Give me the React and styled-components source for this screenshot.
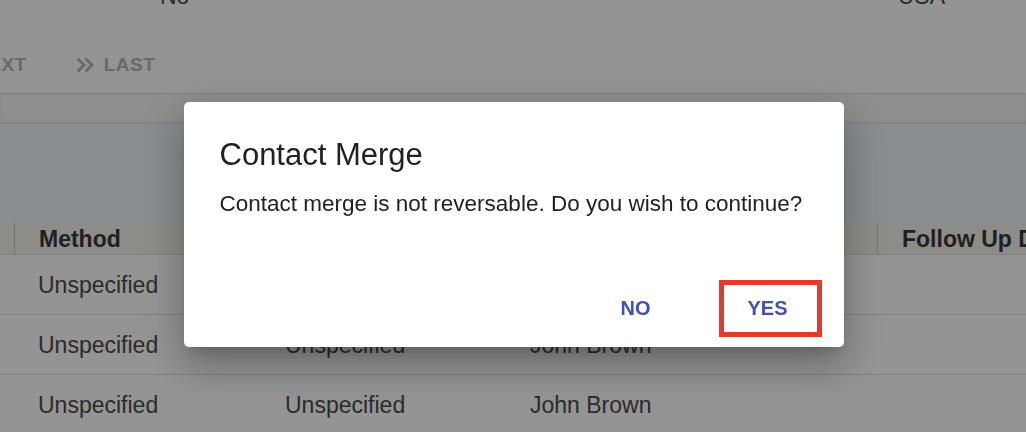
import styled, { createGlobalStyle } from "styled-components";

const GlobalStyle = createGlobalStyle`
	html, body {
		margin: 0;
		padding: 0;
		background: #ffffff;
		overflow: hidden;
	}
	body {
		font-family: "Liberation Sans", Arial, sans-serif;
		color: #4a4a4a;
	}
`;

const Page = styled.div`
	width: 1026px;
	height: 432px;
	overflow: hidden;
`;

const InfoRow = styled.div`
	display: flex;
	height: 30px;
	margin-top: -19px;
	font-size: 23px;
	line-height: 30px;
	color: #4a4a4a;
`;

const InfoCell = styled.div`
	margin-left: ${(props) => props.left || "0"};
	margin-right: ${(props) => props.right || "0"};
`;

const Pager = styled.div`
	display: flex;
	align-items: center;
	height: 83px;
	margin-left: -26px;
	border-bottom: 1px solid #dcdcdc;
	box-sizing: border-box;
	padding-top: 26px;
`;

const PagerButton = styled.div`
	display: flex;
	align-items: center;
	gap: 9px;
	margin-right: ${(props) => props.gap || "0"};
	font-size: 19px;
	font-weight: 600;
	letter-spacing: 0.5px;
	color: #b6b6b6;
`;

const Strip = styled.div`
	height: 30px;
	background: #f4f4f4;
	box-shadow: inset 0 -3px 4px -2px rgba(0, 0, 0, 0.12);
`;

const Banner = styled.div`
	height: 99px;
	background: #e9f3f8;
`;

const TableRow = styled.div`
	display: grid;
	grid-template-columns: 14px 247px 245px 371px 1fr;
	height: ${(props) => (props.head ? "32px" : "60px")};
	background: ${(props) => (props.head ? "#f4f1ea" : "#ffffff")};
	border-bottom: 1px solid #dedede;
	box-sizing: border-box;
	font-size: 23px;
	font-weight: ${(props) => (props.head ? "bold" : "normal")};
	color: ${(props) => (props.head ? "#383838" : "#4a4a4a")};
`;

const Cell = styled.div`
	display: flex;
	align-items: center;
	padding-left: 24px;
	padding-top: 2px;
	white-space: nowrap;
	overflow: hidden;
	border-left: ${(props) => (props.divider ? "1px solid #cfcac0" : "none")};
`;

const Overlay = styled.div`
	position: fixed;
	inset: 0;
	background: rgba(0, 0, 0, 0.42);
	display: flex;
	justify-content: center;
	align-items: flex-start;
	padding-top: 102px;
`;

const Dialog = styled.div`
	width: 660px;
	height: 245px;
	box-sizing: border-box;
	margin-left: 1px;
	padding: 34px 27px 15px 36px;
	background: #ffffff;
	border-radius: 5px;
	display: flex;
	flex-direction: column;
	box-shadow: 0 11px 15px -7px rgba(0, 0, 0, 0.2),
		0 24px 38px 3px rgba(0, 0, 0, 0.14), 0 9px 46px 8px rgba(0, 0, 0, 0.12);
`;

const Title = styled.h2`
	margin: 0;
	font-size: 31px;
	line-height: 37px;
	font-weight: normal;
	color: #222222;
`;

const Message = styled.p`
	margin: 14px 0 0;
	font-size: 22.5px;
	line-height: 34px;
	color: #222222;
`;

const Actions = styled.div`
	display: flex;
	justify-content: flex-end;
	gap: 48px;
	margin-top: auto;
`;

const ActionButton = styled.button`
	height: 47px;
	padding: ${(props) => (props.marked ? "0 29px 0 23px" : "0 26px")};
	border: none;
	background: transparent;
	font-family: "Liberation Sans", Arial, sans-serif;
	font-size: 20px;
	font-weight: bold;
	color: #3f51b5;
	cursor: pointer;
	outline: ${(props) => (props.marked ? "5px solid #e5392b" : "none")};
`;

const DoubleChevron = () => (
	<svg width="18" height="14" viewBox="0 0 18 14" fill="none">
		<path
			d="M1.5 1.5L7 7L1.5 12.5M9.5 1.5L15 7L9.5 12.5"
			stroke="#b6b6b6"
			strokeWidth="3"
			strokeLinecap="square"
		/>
	</svg>
);

const rows = [
	["Unspecified", "Unspecified", "John Brown"],
	["Unspecified", "Unspecified", "John Brown"],
	["Unspecified", "Unspecified", "John Brown"],
];

const App = () => {
	return (
		<Page>
			<GlobalStyle />
			<InfoRow>
				<InfoCell left="160px">No</InfoCell>
				<InfoCell left="auto" right="81px">
					USA
				</InfoCell>
			</InfoRow>
			<Pager>
				<PagerButton gap="50px">NEXT</PagerButton>
				<PagerButton>
					<DoubleChevron />
					LAST
				</PagerButton>
			</Pager>
			<Strip />
			<Banner />
			<TableRow head>
				<Cell />
				<Cell divider>Method</Cell>
				<Cell divider />
				<Cell divider />
				<Cell divider>Follow Up Date</Cell>
			</TableRow>
			{rows.map((row, i) => (
				<TableRow key={i}>
					<Cell />
					<Cell>{row[0]}</Cell>
					<Cell>{row[1]}</Cell>
					<Cell>{row[2]}</Cell>
					<Cell />
				</TableRow>
			))}
			<Overlay>
				<Dialog>
					<Title>Contact Merge</Title>
					<Message>
						Contact merge is not reversable. Do you wish to continue?
					</Message>
					<Actions>
						<ActionButton>NO</ActionButton>
						<ActionButton marked>YES</ActionButton>
					</Actions>
				</Dialog>
			</Overlay>
		</Page>
	);
};

export default App;
